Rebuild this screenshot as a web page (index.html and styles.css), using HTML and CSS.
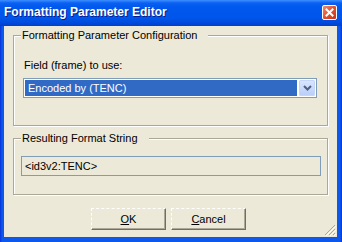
FILE: index.html
```html
<!DOCTYPE html>
<html lang="en">
<head>
    <meta charset="UTF-8">
    <title>Formatting Parameter Editor</title>
    <link rel="stylesheet" href="styles.css">
</head>
<body>
    <div class="window">
        <div class="titlebar">
            <span class="title">Formatting Parameter Editor</span>
            <span class="close-btn">
                <svg width="11" height="11" viewBox="0 0 11 11">
                    <path d="M2.5 2.5 L8.5 8.5 M8.5 2.5 L2.5 8.5" stroke="#fff" stroke-width="2" stroke-linecap="square"/>
                </svg>
            </span>
        </div>

        <div class="client">
            <div class="group">
                <div class="group-title">Formatting Parameter Configuration</div>
                <div class="field-label">Field (frame) to use:</div>
                <div class="combo">
                    <span class="combo-value">Encoded by (TENC)</span>
                    <span class="combo-btn">
                        <svg width="9" height="6" viewBox="0 0 9 6">
                            <path d="M1 1 L4.5 4.5 L8 1" fill="none" stroke="#4d6185" stroke-width="2"/>
                        </svg>
                    </span>
                </div>
            </div>

            <div class="group group-result">
                <div class="group-title">Resulting Format String</div>
                <div class="textbox">&lt;id3v2:TENC&gt;</div>
            </div>

            <div class="buttons">
                <button class="btn"><u>O</u>K</button>
                <button class="btn"><u>C</u>ancel</button>
            </div>

            <!-- size grip sits over the corner -->
            <svg class="grip" width="12" height="12" viewBox="0 0 12 12">
                <path d="M11 1 L1 11 M11 5 L5 11 M11 9 L9 11" stroke="#aca899" stroke-width="1"/>
                <path d="M12 2 L2 12 M12 6 L6 12 M12 10 L10 12" stroke="#fff" stroke-width="1"/>
            </svg>
        </div>
    </div>
</body>
</html>
```

FILE: styles.css
```css
html, body {
    margin: 0;
    padding: 0;
}

body {
    font-family: 'Liberation Sans', Arial, sans-serif;
    font-size: 11px;
    line-height: 13px;
    color: #000;
    background-color: #0a4de0;
}

.window {
    width: 342px;
    height: 242px;
    box-sizing: border-box;
    display: flex;
    flex-direction: column;
    background: linear-gradient(90deg, #0831d9 0, #0d58ec 2px, #0d58ec 340px, #0831d9 342px);
}

.titlebar {
    height: 26px;
    display: flex;
    align-items: center;
    justify-content: space-between;
    padding: 0 5px 0 4px;
    background: linear-gradient(#3d8fff 0, #0a60f2 3px, #0058ee 7px, #0055ea 18px, #0049dc 23px, #003fcc 26px);
}

.title {
    color: #fff;
    font-weight: bold;
    font-size: 12px;
    text-shadow: 1px 1px 0 #0a1e8a;
    margin-top: -1px;
}

.close-btn {
    width: 13px;
    height: 13px;
    border: 1px solid #fff;
    border-radius: 2px;
    background: linear-gradient(135deg, #f08d70, #e2522f 50%, #c2341a);
    display: flex;
    align-items: center;
    justify-content: center;
    margin-top: -1px;
}

.client {
    position: relative;
    flex: 1;
    margin: 0 5px 5px 4px;
    background-color: #ece9d8;
    padding-top: 9px;
}

.group {
    margin: 0 9px;
    height: 91px;
    box-sizing: border-box;
    border: 1px solid #aca899;
    box-shadow: 1px 1px 0 #fff, inset 1px 1px 0 #fff;
}

.group-result {
    margin-top: 12px;
    height: 57px;
}

.group-title {
    width: max-content;
    margin: -7px 0 0 7px;
    padding: 0 11px 0 1px;
    background-color: #ece9d8;
}

.field-label {
    margin: 17px 0 0 10px;
}

.combo {
    display: flex;
    width: 294px;
    height: 20px;
    box-sizing: border-box;
    margin: 6px 0 0 9px;
    padding: 1px;
    border: 1px solid #7f9db9;
    background-color: #fff;
}

.combo-value {
    flex: 1;
    margin-right: 2px;
    padding-left: 3px;
    line-height: 16px;
    color: #fff;
    background-color: #316ac5;
}

.combo-btn {
    width: 16px;
    display: flex;
    align-items: center;
    justify-content: center;
    border-radius: 2px;
    background: linear-gradient(#dce7fd, #b9cdf8);
    box-shadow: inset 0 0 0 1px #c4d5fa;
}

.textbox {
    width: 300px;
    height: 20px;
    box-sizing: border-box;
    margin: 11px 0 0 7px;
    padding-left: 3px;
    line-height: 18px;
    border: 1px solid #7f9db9;
}

.buttons {
    display: flex;
    gap: 5px;
    margin: 13px 0 0 87px;
}

.btn {
    width: 75px;
    height: 22px;
    padding: 0;
    font-family: inherit;
    font-size: 11px;
    color: #000;
    background-color: #ece9d8;
    border: 1px solid;
    border-style: dashed solid solid dashed;
    border-color: #fff #716f64 #716f64 #fff;
    box-shadow: inset -1px -1px 0 #aca899;
}

.grip {
    position: absolute;
    right: 1px;
    bottom: 1px;
}
```
